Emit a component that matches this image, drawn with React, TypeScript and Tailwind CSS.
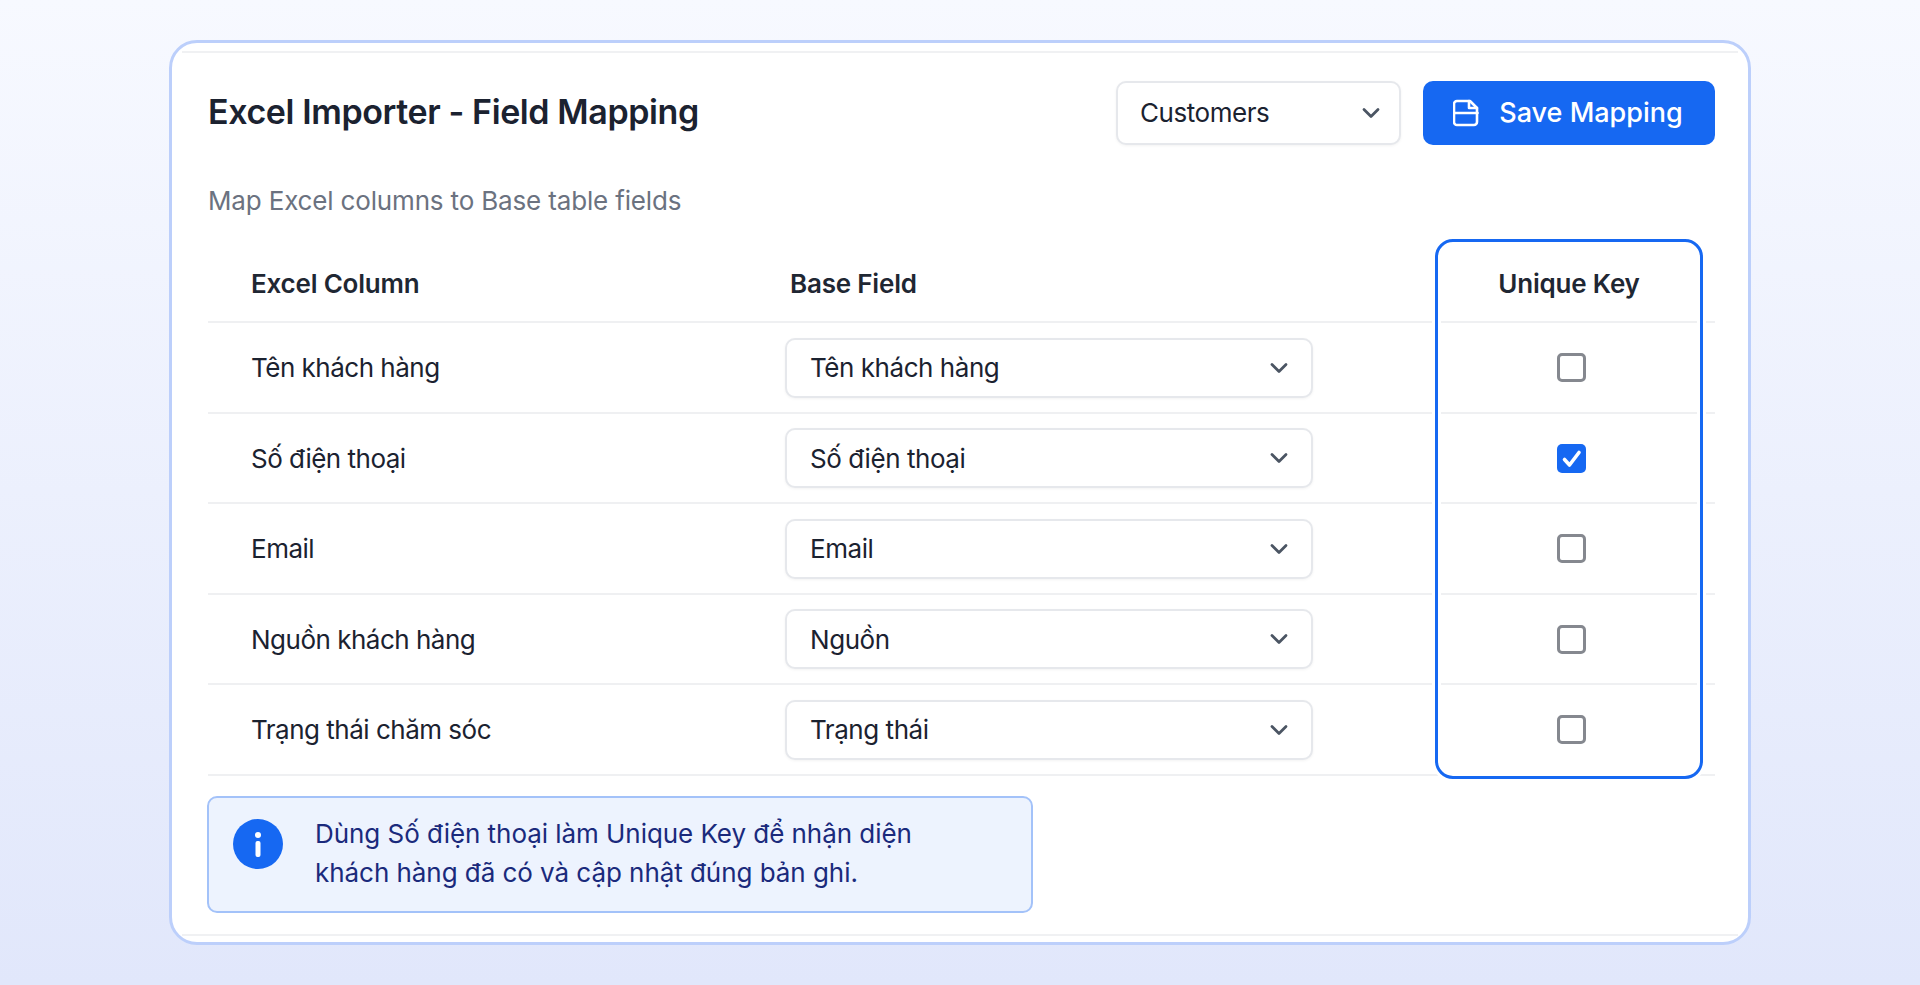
import { ChevronDown } from "lucide-react";

const rows = [
  { column: "Tên khách hàng", field: "Tên khách hàng", unique: false },
  { column: "Số điện thoại", field: "Số điện thoại", unique: true },
  { column: "Email", field: "Email", unique: false },
  { column: "Nguồn khách hàng", field: "Nguồn", unique: false },
  { column: "Trạng thái chăm sóc", field: "Trạng thái", unique: false },
];

const SaveIcon = () => (
  <svg width="26" height="28" viewBox="0 0 26 28" fill="none" stroke="currentColor" strokeWidth="2.6" strokeLinejoin="round" strokeLinecap="round">
    <path d="M4 2h13l7 7v14a3 3 0 0 1-3 3H4a3 3 0 0 1-3-3V5a3 3 0 0 1 3-3z" />
    <path d="M1.5 14h23" />
    <path d="M16 2v7h8" />
  </svg>
);

const Select = ({ label, className }: { label: string; className: string }) => (
  <div className={`flex items-center justify-between rounded-[10px] border-2 border-[#e6e8ec] bg-white text-[26px] tracking-[-0.45px] text-[#1b2230] shadow-[0_1px_3px_rgba(0,0,0,0.05)] ${className}`}>
    <span>{label}</span>
    <ChevronDown size={28} strokeWidth={2.4} className="text-[#4b5563]" />
  </div>
);

const App = () => {
  return (
    <div className="h-[985px] overflow-hidden bg-gradient-to-b from-[#f7f9ff] to-[#e1e7fb] px-[169px] pt-[40px] font-['Inter',sans-serif]">
      <div className="h-[905px] rounded-[28px] border-[3px] border-[#bccffb] bg-white px-[10px] pt-[8px]">
        <div className="border-y-2 border-[#f0f1f3] pl-[26px] pr-[23px] pt-[28px] pb-[21px]">
          <div className="flex items-center justify-between">
            <h1 className="-translate-y-[1px] text-[34px] font-semibold leading-none tracking-[-0.4px] text-[#1b2230]">Excel Importer - Field Mapping</h1>
            <div className="flex gap-[22px]">
              <Select label="Customers" className="h-[64px] w-[285px] pb-[1px] pl-[22px] pr-[14px]" />
              <button className="flex h-[64px] w-[292px] items-center justify-center gap-[20px] rounded-[10px] bg-[#1668f2] pr-[2px] text-[27px] font-medium text-white">
                <SaveIcon />
                <span>Save Mapping</span>
              </button>
            </div>
          </div>

          <p className="mt-[38px] text-[26px] leading-[36px] tracking-[-0.16px] text-[#6b7280]">Map Excel columns to Base table fields</p>

          <div className="relative mt-[21px]">
            <div className="grid h-[83px] grid-cols-[577px_650px_268px] items-center border-b-2 border-[#eff0f2] pt-[6px] text-[26px] font-semibold tracking-[-0.2px] text-[#1f2733]">
              <div className="pl-[43px]">Excel Column</div>
              <div className="pl-[5px]">Base Field</div>
              <div className="text-center">Unique Key</div>
            </div>
            {rows.map((row) => (
              <div key={row.column} className="grid h-[90.5px] grid-cols-[577px_650px_268px] items-center border-b-2 border-[#eff0f2] pt-[1px] text-[26px] tracking-[-0.5px] text-[#1b2230]">
                <div className="pl-[43px]">{row.column}</div>
                <Select label={row.field} className="h-[60px] w-[528px] pl-[23px] pr-[18px]" />
                <div className="flex justify-center pl-[4px]">
                  {row.unique ? (
                    <div className="flex size-[29px] items-center justify-center rounded-[5px] bg-[#1668f2]">
                      <svg width="21" height="21" viewBox="0 0 21 21" fill="none" stroke="white" strokeWidth="3.6" strokeLinecap="round" strokeLinejoin="round">
                        <path d="M3.5 11.5l5 5.5L18 4.5" />
                      </svg>
                    </div>
                  ) : (
                    <div className="size-[29px] rounded-[5px] border-[3px] border-[#85888f] bg-white" />
                  )}
                </div>
              </div>
            ))}
            {/* highlight round the Unique Key column */}
            <div className="pointer-events-none absolute left-[1227px] top-[-1px] bottom-[-3px] w-[268px] rounded-[18px] border-[3px] border-[#1668f2] shadow-[0_0_0_3px_white,inset_0_0_0_3px_white]" />
          </div>

          <div className="-ml-[1px] mt-[20px] flex h-[117px] w-[826px] items-center gap-[32px] rounded-[10px] border-2 border-[#a3c2f9] bg-[#edf3fe] pb-[3px] pl-[24px]">
            <div className="flex size-[50px] shrink-0 -translate-y-[9px] items-center justify-center rounded-full bg-[#1668f2]">
              <svg width="8" height="26" viewBox="0 0 8 26" fill="white">
                <circle cx="4" cy="4" r="3" />
                <rect x="1.5" y="10" width="5" height="16" rx="2" />
              </svg>
            </div>
            <p className="text-[26px] leading-[39px] tracking-[-0.05px] text-[#1a2a7c]">
              Dùng Số điện thoại làm Unique Key để nhận diện
              <br />
              khách hàng đã có và cập nhật đúng bản ghi.
            </p>
          </div>
        </div>
      </div>
    </div>
  );
};

export default App;
